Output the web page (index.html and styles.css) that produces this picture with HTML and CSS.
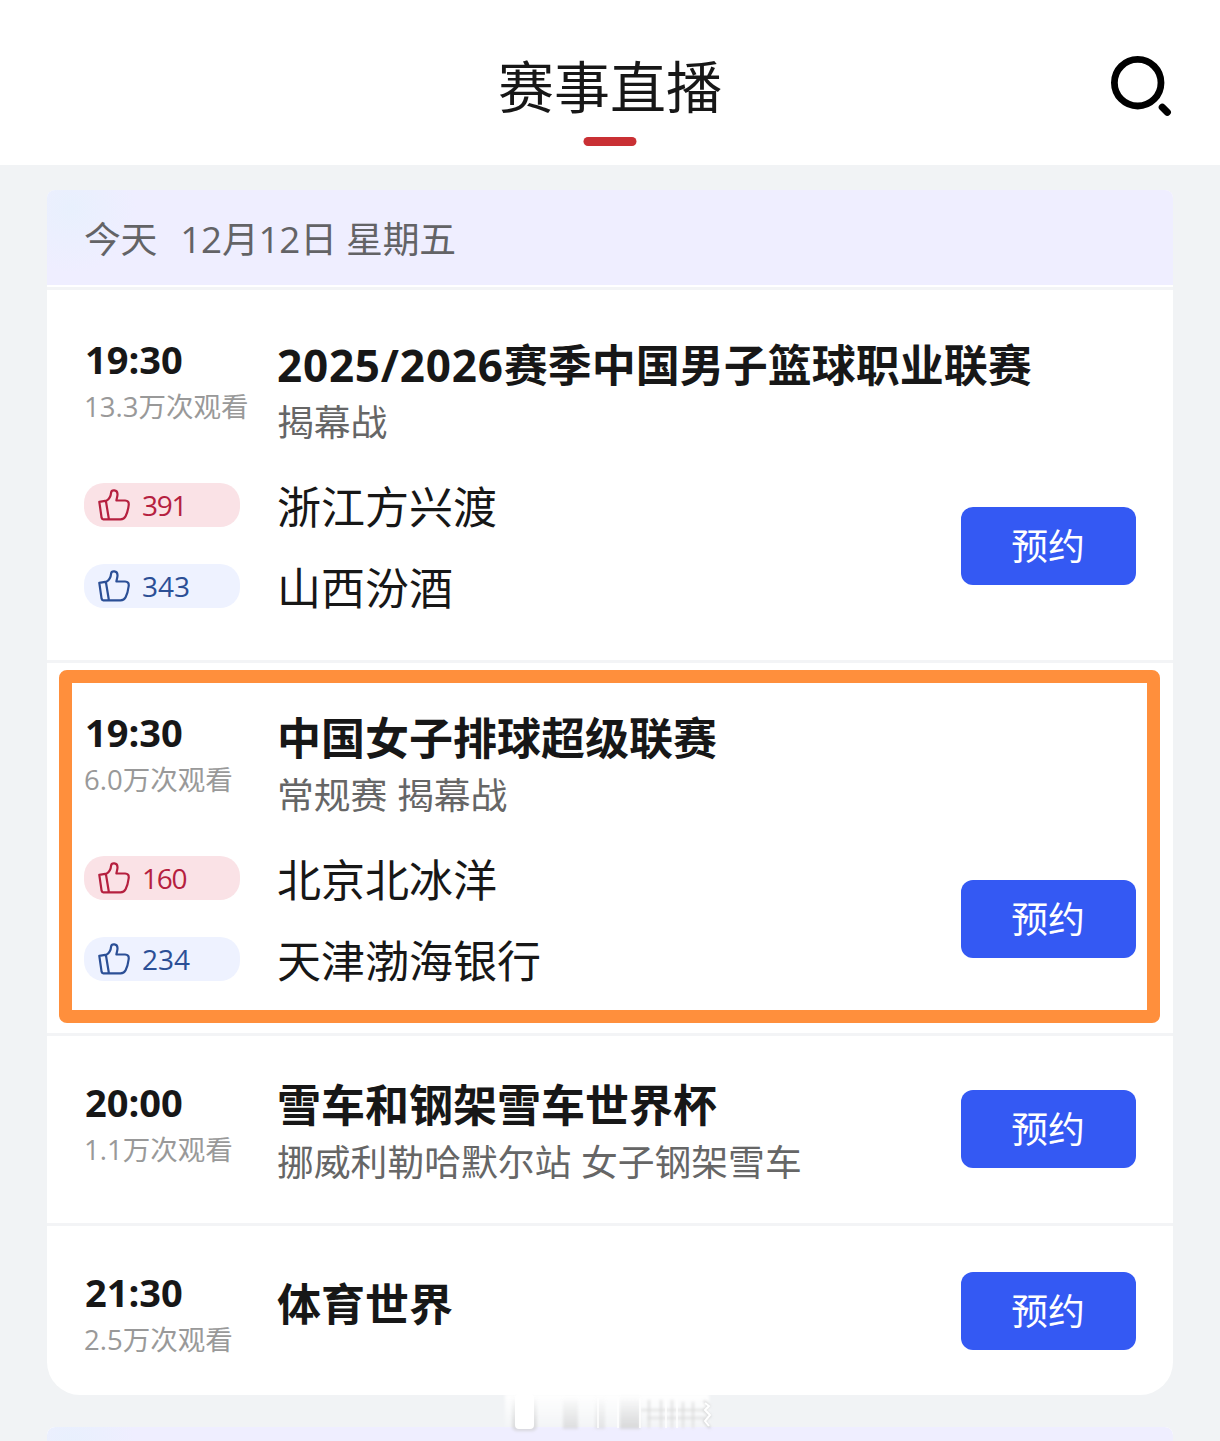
FILE: index.html
```html
<!DOCTYPE html>
<html lang="zh-CN">
<head>
    <meta charset="UTF-8">
    <title>赛事直播</title>
    <link rel="stylesheet" href="styles.css">
</head>
<body>
    <!-- icons -->
    <svg class="defs">
        <symbol id="like" viewBox="0 0 32 32">
            <path d="M1.3 12.8 L8.6 11.7 C11.8 9.6 12.8 7 13.1 3.6 C13.5 .5 19.3 .3 19.5 5 C19.6 7.6 18.7 9.2 18.4 11.5 L27 11.5 C30 11.6 31 13.3 30.7 16 C30.2 20 29.3 24 27.6 27.3 C26.6 29.4 25 30.3 22.5 30.3 L5.3 30.3 C4.3 30.3 3.8 29.8 3.6 28.8 Z M7.9 12 L10.9 30.3" fill="none" stroke="currentColor" stroke-width="2.2" stroke-linejoin="round" stroke-linecap="round"/>
        </symbol>
    </svg>

    <div class="header">
        <h1>赛事直播</h1>
        <svg class="search" width="64" height="64" viewBox="0 0 64 64">
            <circle cx="29.7" cy="29.7" r="23.3" fill="none" stroke="#000" stroke-width="6.8"/>
            <path d="M54.3 54.3 L59.3 59.3" stroke="#000" stroke-width="7.2" stroke-linecap="round"/>
        </svg>
    </div>

    <div class="card">
        <div class="date"><span>今天</span><span>12月12日 星期五</span></div>

        <div class="match">
            <div class="when">
                <div class="time">19:30</div>
                <div class="views">13.3万次观看</div>
            </div>
            <div class="info">
                <h2><span class="season">2025/2026</span>赛季中国男子篮球职业联赛</h2>
                <p>揭幕战</p>
            </div>
            <div class="teams">
                <div class="like red"><svg><use href="#like"/></svg>391</div>
                <div class="team">浙江方兴渡</div>
                <div class="like blue"><svg><use href="#like"/></svg>343</div>
                <div class="team">山西汾酒</div>
            </div>
            <button>预约</button>
        </div>

        <div class="match highlight">
            <div class="when">
                <div class="time">19:30</div>
                <div class="views">6.0万次观看</div>
            </div>
            <div class="info">
                <h2>中国女子排球超级联赛</h2>
                <p>常规赛 揭幕战</p>
            </div>
            <div class="teams">
                <div class="like red"><svg><use href="#like"/></svg>160</div>
                <div class="team">北京北冰洋</div>
                <div class="like blue"><svg><use href="#like"/></svg>234</div>
                <div class="team">天津渤海银行</div>
            </div>
            <button>预约</button>
        </div>

        <div class="match compact">
            <div class="when">
                <div class="time">20:00</div>
                <div class="views">1.1万次观看</div>
            </div>
            <div class="info">
                <h2>雪车和钢架雪车世界杯</h2>
                <p>挪威利勒哈默尔站 女子钢架雪车</p>
            </div>
            <button>预约</button>
        </div>

        <div class="match compact single">
            <div class="when">
                <div class="time">21:30</div>
                <div class="views">2.5万次观看</div>
            </div>
            <div class="info">
                <h2>体育世界</h2>
            </div>
            <button>预约</button>
        </div>

        <!-- faded mark under the last row -->
        <svg class="mark" width="220" height="50" viewBox="0 0 220 50">
            <defs>
                <linearGradient id="fade" x1="0" y1="0" x2="0" y2="1">
                    <stop offset="0" stop-color="#fff"/>
                    <stop offset="1" stop-color="#fff" stop-opacity=".15"/>
                </linearGradient>
                <linearGradient id="shade" x1="0" y1="0" x2="0" y2="1">
                    <stop offset="0" stop-color="#ccc" stop-opacity="0"/>
                    <stop offset="1" stop-color="#ccc" stop-opacity=".7"/>
                </linearGradient>
                <filter id="soft"><feGaussianBlur stdDeviation="1.5"/></filter>
            </defs>
            <rect x="4" y="8" width="204" height="33" fill="url(#fade)" filter="url(#soft)"/>
            <g filter="url(#soft)">
                <rect x="11" y="10" width="25" height="35" rx="5" fill="url(#shade)"/>
                <rect x="62" y="10" width="15" height="33" fill="url(#shade)" opacity=".8"/>
                <rect x="94" y="10" width="10" height="33" fill="url(#shade)" opacity=".6"/>
                <rect x="119" y="10" width="20" height="33" fill="url(#shade)"/>
                <path d="M148 14V42M160 14V42M171 14V42M182 16V42M192 16V42" stroke="#dedede" stroke-width="2"/>
                <path d="M140 24H204M146 32H206" stroke="#d8d8d8" stroke-width="1.5"/>
                <path d="M203 15l5 5-5 4 6 6-6 5 6 7" fill="none" stroke="#bbb" stroke-width="1.5"/>
            </g>
            <rect x="14" y="8" width="19" height="35" rx="4" fill="#fff"/>
            <path d="M97 12V42M117 12V42M139 12V42M165 12V42M176 12V42" stroke="#fff" stroke-width="2" opacity=".8"/>
            <path d="M204 17l4 3-4 4 5 5-5 6 4 5" fill="none" stroke="#fff" stroke-width="2"/>
        </svg>
    </div>

    <div class="card next">
        <div class="date"></div>
    </div>
</body>
</html>
```

FILE: styles.css
```css
*, *::after {
    box-sizing: border-box;
}
body {
    margin: 0;
    background-color: #f1f3f5;
    color: #171717;
    font-family: "Open Sans", "Noto Sans CJK SC", sans-serif;
}
h1, h2, p {
    margin: 0;
}
.defs {
    display: none;
}

/* top bar */
.header {
    position: relative;
    height: 165px;
    padding-top: 56px;
    background-color: #fff;
    text-align: center;
}
.header h1 {
    font-size: 56px;
    line-height: 60px;
    font-weight: 400;
}
.header h1::after {
    content: "";
    display: block;
    width: 53px;
    height: 9px;
    margin: 21px auto 0;
    border-radius: 5px;
    background-color: #c93034;
    transform: translateX(-0.5px);
}
.search {
    position: absolute;
    top: 53px;
    right: 48px;
}

/* schedule card */
.card {
    position: relative;
    width: 1126px;
    margin: 25px auto 0;
    background-color: #fff;
    border-radius: 8px 8px 33px 33px;
}
.date {
    display: flex;
    gap: 23px;
    height: 95px;
    margin-bottom: 2px;
    padding-left: 37px;
    border-radius: 8px 8px 0 0;
    background: radial-gradient(circle at 24px 18px, #e8f0fd, rgba(232, 240, 253, 0) 65px), #efeeff;
    color: #636366;
    font-size: 36.8px;
    line-height: 98px;
    letter-spacing: -0.2px;
}
.match {
    position: relative;
    display: grid;
    grid-template-columns: 193px 1fr 175px;
    height: 373px;
    padding: 46px 37px 0;
    border-top: 3px solid #f3f4f6;
    align-content: start;
}
.time {
    padding-left: 1px;
    font-size: 38px;
    line-height: 46px;
    margin-bottom: 2px;
    font-weight: 700;
}
.views {
    color: #999;
    font-size: 27.5px;
    line-height: 46px;
    white-space: nowrap;
}
.info {
    grid-column: 2 / 4;
    white-space: nowrap;
}
.info h2 {
    font-size: 44px;
    line-height: 58px;
    font-weight: 700;
}
.season {
    letter-spacing: 0.8px;
}
.info p {
    color: #666;
    font-size: 36.8px;
    line-height: 56px;
}
.teams {
    grid-column: 1 / 3;
    display: grid;
    grid-template-columns: 156px 1fr;
    gap: 37px;
    margin-top: 33px;
}
.team {
    font-size: 44px;
    line-height: 48px;
    height: 44px;
}
.like {
    display: flex;
    align-items: center;
    gap: 12px;
    height: 44px;
    padding-left: 14px;
    border-radius: 20px;
    font-size: 28px;
    line-height: 44px;
}
.like svg {
    width: 32px;
    height: 32px;
}
.red {
    background-color: #fae2e6;
    color: #b5203f;
    letter-spacing: -1.3px;
}
.blue {
    background-color: #eef2ff;
    color: #2b4f96;
}
button {
    width: 175px;
    height: 78px;
    margin-top: 57px;
    padding: 0 1px 0 0;
    border: none;
    border-radius: 12px;
    background-color: #3459f3;
    color: #fff;
    font-family: inherit;
    font-size: 36.8px;
    line-height: 78px;
}

/* orange frame around the match */
.highlight::after {
    content: "";
    position: absolute;
    top: 7px;
    left: 12px;
    width: 1101px;
    height: 353px;
    border: 13px solid #ff8f3c;
    border-radius: 8px;
}

/* rows without teams */
.compact {
    height: 190px;
    padding-top: 0;
    align-content: stretch;
}
.compact .when {
    padding-top: 43px;
}
.compact .info {
    grid-column: 2;
    padding-top: 40px;
}
.compact button {
    align-self: start;
    margin-top: 54px;
}
.single {
    height: 172px;
}
.single .info {
    padding-top: 49px;
}
.single button {
    margin-top: 46px;
}
.mark {
    position: absolute;
    left: 454px;
    bottom: -41px;
    z-index: 1;
}

/* top edge of the next day */
.next {
    height: 14px;
    margin-top: 32px;
    overflow: hidden;
    border-radius: 8px 8px 0 0;
}
```
